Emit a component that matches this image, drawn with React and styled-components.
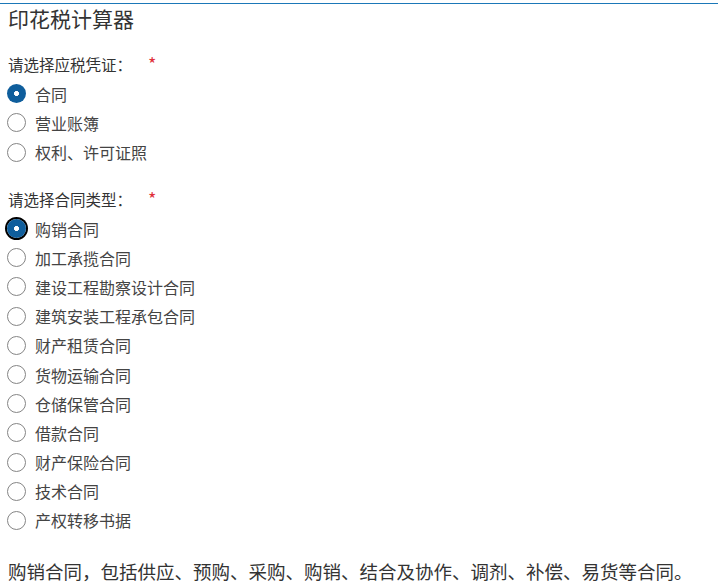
import React, { useState } from "react";
import styled, { createGlobalStyle } from "styled-components";

const Global = createGlobalStyle`
  html, body { margin: 0; padding: 0; background: #fff; }
  body { font-family: "Noto Sans CJK SC", "Noto Sans", sans-serif; color: #333; }
`;

const Page = styled.div`
  padding-top: 3px;
`;

const Panel = styled.div`
  border-top: 1px solid #1b78b8;
  padding: 0 8px;
`;

const Title = styled.h1`
  margin: 0;
  font-size: 21px;
  font-weight: 400;
  line-height: 28px;
  color: #333;
`;

const Group = styled.fieldset`
  border: 0;
  margin: ${(p) => p.$top}px 0 0;
  padding: 0;
  min-width: 0;
`;

const Label = styled.legend`
  padding: 0;
  font-size: 15.5px;
  line-height: 29.2px;
  color: #333;
  display: flex;
  align-items: center;
`;

const Required = styled.span`
  color: #e0303a;
  margin-left: 16px;
  font-size: 18px;
  position: relative;
  top: -1px;
`;

const Row = styled.label`
  display: flex;
  align-items: center;
  height: 29.2px;
  font-size: 16px;
  color: #444;
  cursor: pointer;
`;

const Radio = styled.input.attrs({ type: "radio" })`
  appearance: none;
  margin: 0 9px 0 -1px;
  width: 19px;
  height: 19px;
  border-radius: 50%;
  border: 1px solid #858585;
  background: #fff;
  box-sizing: border-box;
  flex: none;
  &:checked {
    border: 0;
    background: radial-gradient(circle, #fff 0 2.2px, #0f5e9c 2.8px);
  }
  &:checked[data-focus="true"] {
    box-shadow: 0 0 0 2px #000;
  }
  &:focus { outline: none; }
`;

const Desc = styled.p`
  margin: 23px 0 0;
  font-size: 18.5px;
  line-height: 26px;
  color: #333;
`;

const vouchers = ["合同", "营业账簿", "权利、许可证照"];
const types = [
  "购销合同",
  "加工承揽合同",
  "建设工程勘察设计合同",
  "建筑安装工程承包合同",
  "财产租赁合同",
  "货物运输合同",
  "仓储保管合同",
  "借款合同",
  "财产保险合同",
  "技术合同",
  "产权转移书据",
];

export default function App() {
  const [voucher, setVoucher] = useState(0);
  const [type, setType] = useState(0);
  return (
    <Page>
      <Global />
      <Panel>
        <Title>印花税计算器</Title>
        <Group $top={18}>
          <Label>
            请选择应税凭证：<Required>*</Required>
          </Label>
          {vouchers.map((v, i) => (
            <Row key={v}>
              <Radio name="voucher" checked={voucher === i} onChange={() => setVoucher(i)} />
              {v}
            </Row>
          ))}
        </Group>
        <Group $top={18}>
          <Label>
            请选择合同类型：<Required>*</Required>
          </Label>
          {types.map((t, i) => (
            <Row key={t}>
              <Radio
                name="type"
                data-focus={i === 0 ? "true" : "false"}
                checked={type === i}
                onChange={() => setType(i)}
              />
              {t}
            </Row>
          ))}
        </Group>
        <Desc>购销合同，包括供应、预购、采购、购销、结合及协作、调剂、补偿、易货等合同。</Desc>
      </Panel>
    </Page>
  );
}
